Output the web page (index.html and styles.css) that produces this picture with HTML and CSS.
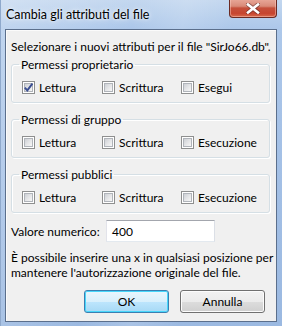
FILE: index.html
```html
<!DOCTYPE html>
<html lang="it">
<head>
<meta charset="utf-8">
<title>Cambia gli attributi del file</title>
<link rel="stylesheet" href="styles.css">
</head>
<body>
<div class="window">
  <div class="titlebar">
    <span class="title">Cambia gli attributi del file</span>
    <div class="close">
      <svg width="14" height="11" viewBox="0 0 14 11">
        <path d="M2 1.5 L12 9.5 M12 1.5 L2 9.5" stroke="#4a2020" stroke-width="4.2" stroke-linecap="square" opacity="0.55"/>
        <path d="M2 1.5 L12 9.5 M12 1.5 L2 9.5" stroke="#ffffff" stroke-width="2.6" stroke-linecap="square"/>
      </svg>
    </div>
  </div>
  <div class="client">
    <p class="intro">Selezionare i nuovi attributi per il file "SirJo66.db".</p>

    <fieldset class="group">
      <legend>Permessi proprietario</legend>
      <div class="row">
        <label class="cb"><span class="box"><svg class="tick" width="11" height="11" viewBox="0 0 11 11"><path d="M1.8 5.6 L4.3 8.4 L9.4 1.6" fill="none" stroke="#3c4f92" stroke-width="1.9"/></svg></span>Lettura</label>
        <label class="cb"><span class="box"></span>Scrittura</label>
        <label class="cb"><span class="box"></span>Esegui</label>
      </div>
    </fieldset>

    <fieldset class="group">
      <legend>Permessi di gruppo</legend>
      <div class="row">
        <label class="cb"><span class="box"></span>Lettura</label>
        <label class="cb"><span class="box"></span>Scrittura</label>
        <label class="cb"><span class="box"></span>Esecuzione</label>
      </div>
    </fieldset>

    <fieldset class="group">
      <legend>Permessi pubblici</legend>
      <div class="row">
        <label class="cb"><span class="box"></span>Lettura</label>
        <label class="cb"><span class="box"></span>Scrittura</label>
        <label class="cb"><span class="box"></span>Esecuzione</label>
      </div>
    </fieldset>

    <div class="value-row">
      <span class="value-label">Valore numerico:</span>
      <div class="input">400</div>
    </div>

    <p class="note">È possibile inserire una x in qualsiasi posizione per<br>mantenere l'autorizzazione originale del file.</p>

    <div class="buttons">
      <div class="btn default">OK</div>
      <div class="btn">Annulla</div>
    </div>
  </div>
</div>
</body>
</html>
```

FILE: styles.css
```css
* { box-sizing: border-box; }
html, body { margin: 0; padding: 0; }
body {
  font-family: Lato, "Noto Sans", sans-serif;
  font-size: 12px;
  line-height: 15px;
  color: #000;
  background: #fff;
}
.window {
  width: 282px;
  height: 326px;
  display: flex;
  flex-direction: column;
  padding: 0 5px 4px 4px;
  background:
    linear-gradient(100deg, rgba(255,255,255,0.25) 0%, rgba(255,255,255,0) 40%, rgba(255,255,255,0.15) 55%, rgba(0,0,0,0) 70%),
    linear-gradient(to bottom, #c3d7ef 0px, #adc8ea 28px, #a6c2e7 120px, #9bb9e1 326px);
  border-left: 1px solid #8fa9cc;
}
.titlebar {
  height: 29px;
  display: flex;
  align-items: flex-start;
  flex: none;
}
.title {
  flex: 1;
  padding: 7px 0 0 1px;
  font-size: 12.5px;
  line-height: 15px;
  color: #000;
  white-space: nowrap;
  text-shadow: 0 0 6px rgba(255,255,255,0.9), 0 0 3px rgba(255,255,255,0.8);
}
.close {
  width: 48px;
  height: 19px;
  margin-top: -1px;
  display: flex;
  align-items: center;
  justify-content: center;
  border: 1px solid #6b2a22;
  border-top: none;
  border-radius: 0 0 4px 4px;
  background: linear-gradient(to bottom, #e9a99a 0%, #d98a78 40%, #c5503b 50%, #c7452f 80%, #d76a4c 100%);
  box-shadow: inset 0 0 0 1px rgba(255,210,200,0.45);
}
.close svg { display: block; margin-top: 1px; }
.client {
  flex: 1;
  background: #f0f0f0;
  border: 1px solid #5b6f8c;
  padding: 9px 6px 0 5px;
  box-shadow: inset 1px 1px 0 #fbfbfb;
}
.intro { margin: 0; height: 15px; white-space: nowrap; }

.group {
  margin: 9px 0 0 0;
  padding: 8px 10px 7px 10px;
  border: 1px solid #d5dfe5;
  border-radius: 3px;
  box-shadow: inset 1px 1px 0 #fff, 1px 1px 0 #fff;
  min-width: 0;
}
.group:first-of-type { margin-top: 3px; }
.group legend {
  padding: 0 2px;
  margin-left: -3px;
  line-height: 15px;
}
.row {
  display: grid;
  grid-template-columns: 80px 79px auto;
  height: 15px;
  align-items: center;
}
.cb {
  display: flex;
  align-items: center;
  gap: 4px;
  white-space: nowrap;
}
.box {
  width: 13px;
  height: 13px;
  flex: none;
  position: relative;
  border: 1px solid #8e8f8f;
  background: #fff;
}
.box::before {
  content: "";
  position: absolute;
  left: 1px; top: 1px; right: 1px; bottom: 1px;
  border: 1px solid #b0b4ba;
  background: linear-gradient(135deg, #cdd0d5 0%, #e4e5e7 50%, #f7f7f7 100%);
}
.tick { position: absolute; left: 0; top: 0; }

.value-row {
  margin-top: 7px;
  display: flex;
  align-items: center;
  height: 22px;
}
.value-label { width: 95px; flex: none; white-space: nowrap; }
.input {
  width: 109px;
  height: 22px;
  background: #fff;
  border: 1px solid #abadb3;
  border-top-color: #a3a6ad;
  border-left-color: #e2e3ea;
  border-right-color: #dbdfe6;
  border-bottom-color: #e3e9ef;
  padding: 3px 0 0 5px;
  line-height: 15px;
}
.note { margin: 8px 0 0 0; line-height: 15px; white-space: nowrap; }

.buttons {
  margin-top: 10px;
  display: flex;
  justify-content: flex-end;
  gap: 11px;
  padding-right: 5px;
}
.btn {
  width: 85px;
  height: 23px;
  border: 1px solid #707070;
  border-radius: 3px;
  display: flex;
  align-items: center;
  justify-content: center;
  background: linear-gradient(to bottom, #f2f2f2 0%, #ebebeb 50%, #dddddd 50%, #cfcfcf 100%);
  box-shadow: inset 0 0 0 1px #fcfcfc;
  padding-bottom: 1px;
}
.btn.default {
  border-color: #3c7fb1;
  background: linear-gradient(to bottom, #eaf6fd 0%, #d9f0fc 50%, #bee6fd 50%, #a7d9f5 100%);
  box-shadow: inset 0 0 0 1px #48d7fb;
}
```
